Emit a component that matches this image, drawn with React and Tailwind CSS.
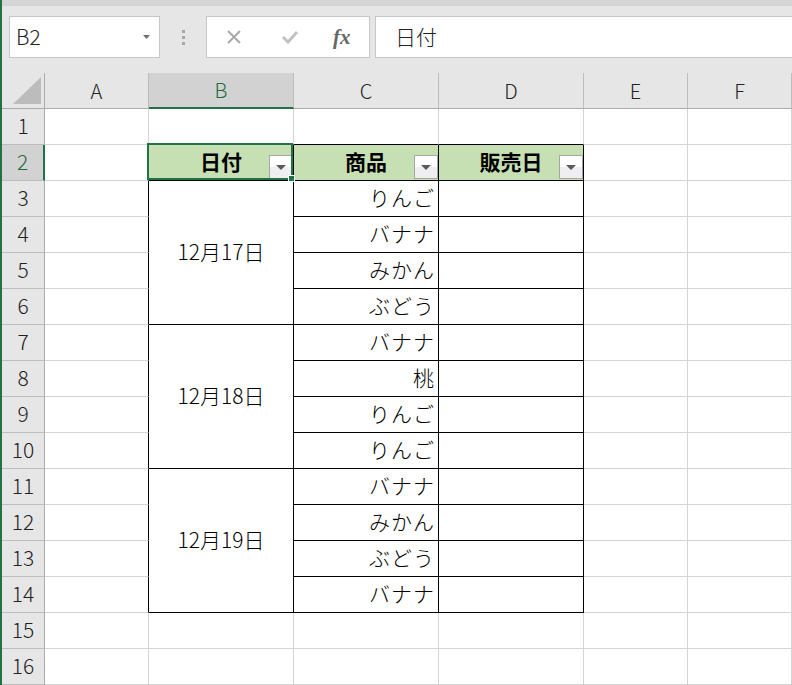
import React from 'react'

const FONT = { fontFamily: '"Noto Sans CJK JP", "Noto Sans", sans-serif' }

const COLS = ['A', 'B', 'C', 'D', 'E', 'F']

const products = [
  'りんご', 'バナナ', 'みかん', 'ぶどう',
  'バナナ', '桃', 'りんご', 'りんご',
  'バナナ', 'みかん', 'ぶどう', 'バナナ',
]

const dates = { 3: '12月17日', 7: '12月18日', 11: '12月19日' }

function FilterButton() {
  return (
    <div className="absolute right-0 bottom-[1px] w-[24px] h-[24px] border border-[#a6a6a6] bg-gradient-to-b from-white from-50% to-[#eeeef3] to-50% flex items-center justify-center">
      <svg width="10" height="5" viewBox="0 0 10 5">
        <polygon points="0,0 10,0 5,5" fill="#5a5a5a" />
      </svg>
    </div>
  )
}

function FormulaBar() {
  return (
    <div className="h-[73px] bg-[#e6e6e6]">
      <div className="h-[6px] bg-[#d5d5d5]" />
      <div className="mt-[10px] flex h-[42px]">
        <div className="relative ml-[7px] w-[151px] bg-white border border-[#c6c6c6] flex items-center pl-[6px] text-[21px] font-light text-[#222]">
          B2
          <svg className="absolute right-[9px] top-[18px]" width="7" height="4" viewBox="0 0 7 4">
            <polygon points="0,0 7,0 3.5,4" fill="#707070" />
          </svg>
        </div>
        <div className="w-[46px] flex flex-col items-center justify-center gap-[3px]">
          <div className="w-[3px] h-[3px] bg-[#a8a8a8]" />
          <div className="w-[3px] h-[3px] bg-[#a8a8a8]" />
          <div className="w-[3px] h-[3px] bg-[#a8a8a8]" />
        </div>
        <div className="w-[164px] bg-white border border-[#c6c6c6] flex items-center">
          <svg className="ml-[19px]" width="16" height="16" viewBox="0 0 16 16">
            <path d="M2 2 L14 14 M14 2 L2 14" stroke="#a9a9a9" strokeWidth="2" />
          </svg>
          <svg className="ml-[39px]" width="18" height="16" viewBox="0 0 18 16">
            <path d="M2 8 L7 13 L16 3" stroke="#c2c2c2" strokeWidth="3" fill="none" />
          </svg>
          <span
            className="ml-[34px] text-[21px] italic font-bold text-[#666] leading-none"
            style={{ fontFamily: '"Liberation Serif", serif' }}
          >
            fx
          </span>
        </div>
        <div className="ml-[5px] flex-1 bg-white border border-[#c6c6c6] border-r-0 flex items-center pl-[19px] text-[21px] font-light text-[#222]">
          日付
        </div>
      </div>
    </div>
  )
}

function Sheet() {
  const cells = []

  // header row
  cells.push(
    <div key="corner" className="relative bg-[#e6e6e6] border-r border-b border-[#ababab]">
      <svg className="absolute left-0 top-0" width="42" height="35" viewBox="0 0 42 35">
        <polygon points="39,4 39,31 11,31" fill="#bcbcbc" />
      </svg>
    </div>
  )
  COLS.forEach((c) => {
    const sel = c === 'B'
    cells.push(
      <div
        key={'h' + c}
        className={
          sel
            ? 'flex items-center justify-center bg-[#d2d2d2] border-r border-r-[#bcbcbc] border-b-2 border-b-[#217346] text-[20px] font-light text-[#1e6b40]'
            : 'flex items-center justify-center bg-[#e6e6e6] border-r border-r-[#bcbcbc] border-b border-b-[#ababab] text-[20px] font-light text-[#222]'
        }
      >
        {c}
      </div>
    )
  })

  for (let r = 1; r <= 16; r++) {
    const sel = r === 2
    cells.push(
      <div
        key={'r' + r}
        className={
          sel
            ? 'flex items-center justify-center pb-[2px] bg-[#d2d2d2] border-r-2 border-r-[#217346] border-b border-b-[#bcbcbc] text-[21px] font-light text-[#1e6b40]'
            : 'flex items-center justify-center pb-[2px] bg-[#e6e6e6] border-r border-r-[#ababab] border-b border-b-[#bcbcbc] text-[21px] font-light text-[#222]'
        }
      >
        {r}
      </div>
    )

    const inTable = r >= 2 && r <= 14

    // A
    cells.push(
      <div
        key={'A' + r}
        className={
          inTable
            ? 'border-r border-b border-r-black border-b-[#d4d4d4]'
            : 'border-r border-b border-r-[#d4d4d4] border-b-[#d4d4d4]'
        }
      />
    )

    if (r === 2) {
      const heads = ['日付', '商品', '販売日']
      heads.forEach((h, i) => {
        cells.push(
          <div
            key={'hd' + i}
            className="relative flex items-center justify-center pb-[2px] bg-[#c6e0b4] border-r border-b border-black text-[21px] font-bold text-black"
          >
            {h}
            <FilterButton />
            {i === 0 && (
              <div className="absolute -left-[2px] -top-[2px] right-0 bottom-0 z-10 border-2 border-[#217346]">
                <div className="absolute -right-[4px] -bottom-[4px] w-[7px] h-[7px] bg-[#217346] border border-white" />
              </div>
            )}
          </div>
        )
      })
    } else if (inTable) {
      if (dates[r]) {
        cells.push(
          <div
            key={'B' + r}
            className="row-span-4 flex items-center justify-center pb-[2px] border-r border-b border-black text-[21px] font-light text-black"
          >
            {dates[r]}
          </div>
        )
      }
      cells.push(
        <div
          key={'C' + r}
          className="flex items-center justify-end pr-[3px] pb-[2px] border-r border-b border-black text-[21px] font-light tracking-[1px] text-black"
        >
          {products[r - 3]}
        </div>
      )
      cells.push(<div key={'D' + r} className="border-r border-b border-black" />)
    } else {
      ;['B', 'C', 'D'].forEach((c) =>
        cells.push(
          <div
            key={c + r}
            className={
              r === 1
                ? 'border-r border-b border-r-[#d4d4d4] border-b-black'
                : 'border-r border-b border-[#d4d4d4]'
            }
          />
        )
      )
    }

    cells.push(<div key={'E' + r} className="border-r border-b border-[#d4d4d4]" />)
    cells.push(<div key={'F' + r} className="border-r border-b border-[#d4d4d4]" />)
  }

  return (
    <div className="grid grid-cols-[43px_104px_145px_145px_145px_104px_1fr] auto-rows-[36px]">
      {cells}
    </div>
  )
}

export default function App() {
  return (
    <div className="h-[685px] w-[792px] overflow-hidden border-l-2 border-[#217346] bg-white" style={FONT}>
      <FormulaBar />
      <Sheet />
    </div>
  )
}
